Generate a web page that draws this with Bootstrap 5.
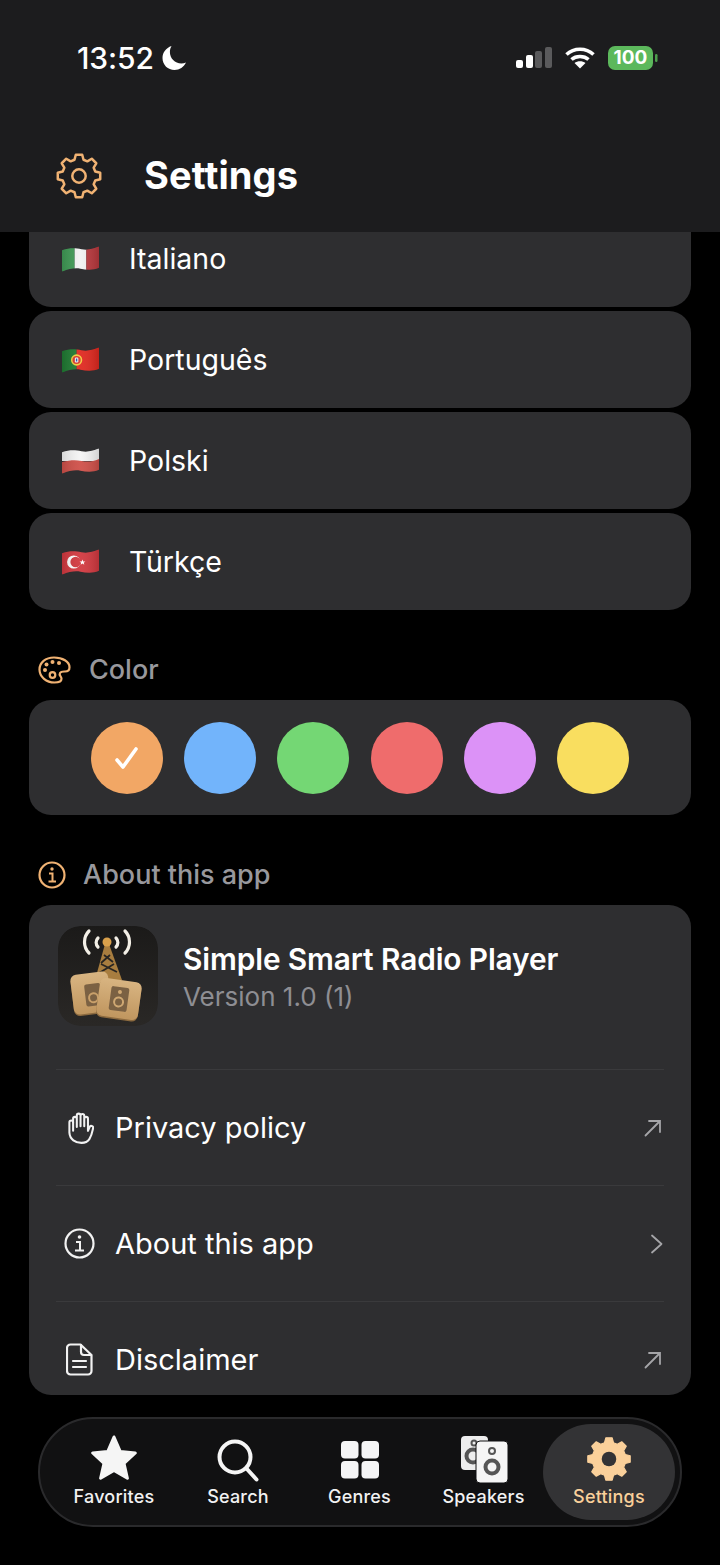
<!DOCTYPE html>
<html lang="en">
<head>
  <meta charset="UTF-8">
  <meta name="viewport" content="width=device-width, initial-scale=1">
  <title>Settings</title>
  <link href="https://cdn.jsdelivr.net/npm/bootstrap@5.3.0/dist/css/bootstrap.min.css" rel="stylesheet">
  <style>
    body { background: #000; color: #fff; font-family: Inter, "Liberation Sans", sans-serif; width: 720px; height: 1565px; }
    .top-head { background: #1c1c1e; height: 232px; flex: none; }
    .status-line { height: 116px; padding: 42px 62px 0 77px; }
    .clock { font-size: 30px; font-weight: 500; line-height: 32px; letter-spacing: -.1px; }
    .head-title { padding: 4px 0 0 56px; height: 116px; }
    .head-title h1 { font-size: 38px; font-weight: 700; margin: 0 0 0 42px; letter-spacing: .1px; }
    .page-body { padding: 0 29px; flex: none; }
    .panel { background: #2e2e30; border-radius: 22px; }
    .lang-row { height: 97px; margin-bottom: 4px; padding-left: 33px; font-size: 28.500px; gap: 30px; }
    .lang-row span { padding-top: 2px; }
    .lang-row.cut-top { height: 75px; border-radius: 0 0 22px 22px; padding-bottom: 22px; }
    .lang-row:last-of-type { margin-bottom: 0; }
    .sect-label { height: 36px; margin: 41px 0 13px; padding: 2px 0 0 9px; color: #98989d; font-size: 27px; font-weight: 500; }
    .swatches { height: 115px; gap: 21.200px; }
    .swatch { width: 72px; height: 72px; border-radius: 50%; }
    .about-panel { height: 490px; overflow: hidden; }
    .app-line { height: 164px; padding: 21px 0 0 29px; }
    .app-icon { width: 100px; height: 100px; border-radius: 22px; flex: none; }
    .app-text { margin: 14px 0 0 25px; }
    .app-name { font-size: 29.800px; font-weight: 600; line-height: 38px; letter-spacing: -.1px; }
    .app-ver { font-size: 26px; color: #8e8e93; line-height: 38px; }
    .link-line { height: 116px; margin: 0 27px; border-top: 1px solid #3a3a3c; font-size: 29px; }
    .link-icon { width: 46px; margin-right: 13px; }
    .go-arrow { margin-right: 2px; }
    .go-chevron { margin-right: 1px; }
    .tab-strip { margin: 22px 38px 0; height: 110px; background: #111112; border: 2px solid #2a2a2c; border-radius: 55px; padding: 5px 5px 5px 12px; flex: none; }
    .tab-item { font-size: 18px; font-weight: 500; line-height: 22px; height: 96px; flex: none; color: #f2f2f2; letter-spacing: .2px; padding-bottom: 12px; }
    .tab-item svg { height: 50px; margin-bottom: 2px; }
    .tab-on { background: #333335; border-radius: 48px; color: #fad09a; width: 132px; margin-left: -4px; }
  </style>
</head>
<body class="d-flex flex-column overflow-hidden">
  <svg class="position-absolute" width="0" height="0">
    <defs>
      <clipPath id="flagWave"><path d="M0 4C9 1 14 2 20 3S31 3 38 0V22C31 25 25 24 19 23S8 23 0 26Z"/></clipPath>
      <linearGradient id="flagShade" x1="0" x2="1" y1="0" y2="0">
        <stop offset="0" stop-color="#000" stop-opacity=".12"/>
        <stop offset=".5" stop-color="#fff" stop-opacity=".06"/>
        <stop offset="1" stop-color="#000" stop-opacity=".14"/>
      </linearGradient>
      <linearGradient id="tileShade" x1="0" x2="0" y1="0" y2="1">
        <stop offset="0" stop-color="#d8b481"/>
        <stop offset="1" stop-color="#c0965f"/>
      </linearGradient>
    </defs>
  </svg>

  <header class="top-head">
    <div class="status-line d-flex justify-content-between align-items-start">
      <div class="d-flex align-items-center gap-2">
        <span class="clock">13:52</span>
        <svg width="25" height="26" viewBox="0 0 25 26"><path fill="#fff" d="M9.500 1C4 3 .5 7.500.5 13c0 7 5.500 12 12 12 5 0 9.500-3 11.500-7.500-1.500.6-3 .9-4.600.9-6.500 0-11.500-5-11.500-11.400C7.900 4.800 8.500 2.800 9.500 1z"/></svg>
      </div>
      <div class="d-flex align-items-center" style="gap:13px;margin-top:4px">
        <svg width="36" height="22" viewBox="0 0 36 22">
          <rect x="0" y="13" width="7" height="8" rx="2" fill="#fff"/>
          <rect x="10" y="8" width="7" height="13" rx="2" fill="#fff"/>
          <rect x="19" y="4" width="7" height="17" rx="2" fill="#5a5a5c"/>
          <rect x="29" y="0" width="7" height="21" rx="2" fill="#5a5a5c"/>
        </svg>
        <svg width="30" height="22" viewBox="0 0 30 22" fill="none" stroke="#fff" stroke-width="3.600">
          <path d="M1.500 7.500C9 .5 21 .5 28.500 7.500"/>
          <path d="M6.500 12.500C11 8.500 19 8.500 23.500 12.500"/>
          <path fill="#fff" stroke="none" d="M9.500 16C12.500 13.500 17.500 13.500 20.500 16L15 21.500Z"/>
        </svg>
        <div class="d-flex align-items-center">
          <svg width="50" height="24" viewBox="0 0 50 24">
            <rect x="0" y="0" width="45" height="24" rx="7" fill="#5cb85c"/>
            <rect x="47" y="8" width="2.500" height="8" rx="1.200" fill="#4d9d4d"/>
            <text x="22.500" y="18" text-anchor="middle" font-family="Inter, sans-serif" font-size="19" font-weight="700" fill="#fff">100</text>
          </svg>
        </div>
      </div>
    </div>
    <div class="head-title d-flex align-items-center">
      <svg width="46" height="46" viewBox="0 0 24 24" fill="none" stroke="#f0b273" stroke-width="1.300" stroke-linejoin="round">
        <path class="gear-shape"/>
        <circle cx="12" cy="12" r="3.500"/>
      </svg>
      <h1>Settings</h1>
    </div>
  </header>

  <main class="page-body">
    <div class="panel lang-row cut-top d-flex align-items-center">
      <svg width="37" height="26" viewBox="0 0 38 26"><g clip-path="url(#flagWave)"><rect width="13" height="26" fill="#3f9a55"/><rect x="13" width="12" height="26" fill="#f2f2f2"/><rect x="25" width="13" height="26" fill="#b9383d"/><rect width="38" height="26" fill="url(#flagShade)"/></g></svg>
      <span>Italiano</span>
    </div>
    <div class="panel lang-row d-flex align-items-center">
      <svg width="37" height="26" viewBox="0 0 38 26"><g clip-path="url(#flagWave)"><rect width="15" height="26" fill="#1f7a32"/><rect x="15" width="23" height="26" fill="#e0281f"/><circle cx="15" cy="13" r="5.800" fill="#f2cf3c"/><circle cx="15" cy="13" r="4.200" fill="#d8352c"/><rect x="13.200" y="10.500" width="3.600" height="5" rx="1.200" fill="#f4f4f4"/><rect x="14.300" y="11.500" width="1.400" height="3" fill="#2a4fa8"/><rect width="38" height="26" fill="url(#flagShade)"/></g></svg>
      <span>Português</span>
    </div>
    <div class="panel lang-row d-flex align-items-center">
      <svg width="37" height="26" viewBox="0 0 38 26"><g clip-path="url(#flagWave)"><rect width="38" height="13" fill="#f4f4f4"/><path fill="#cf4f48" d="M0 14C9 12 14 12 20 13S31 14 38 11V26H0Z"/><rect width="38" height="26" fill="url(#flagShade)"/></g></svg>
      <span>Polski</span>
    </div>
    <div class="panel lang-row d-flex align-items-center">
      <svg width="37" height="26" viewBox="0 0 38 26"><g clip-path="url(#flagWave)"><rect width="38" height="26" fill="#d2383f"/><circle cx="12" cy="13" r="6.800" fill="#fff"/><circle cx="14" cy="13" r="5.400" fill="#d2383f"/><path fill="#fff" d="M21 10.500l.8 2 2.200-.1-1.700 1.300.6 2.100-1.900-1.200-1.900 1.200.6-2.100-1.700-1.300 2.200.1z"/><rect width="38" height="26" fill="url(#flagShade)"/></g></svg>
      <span>Türkçe</span>
    </div>

    <div class="sect-label d-flex align-items-center" style="gap:18px">
      <svg width="33" height="28" viewBox="0 0 33 28" fill="none" stroke="#f0b273" stroke-width="2.200">
        <path d="M16 1.500C7.500 1.500 1.500 6.500 1.500 13.500c0 7.500 7 13 15 13 4.500 0 7-1.500 7-3.800 0-2.700-3-3.200-1.500-5.700 1-1.700 3-1.500 5-1.500 2.800 0 4.500-1.600 4.500-4.300C31.500 5.500 24.500 1.500 16 1.500z"/>
        <circle cx="14.500" cy="19" r="2.800"/>
        <g fill="#f0b273" stroke="none"><circle cx="7" cy="14" r="2"/><circle cx="8.500" cy="8.500" r="2"/><circle cx="14.500" cy="6" r="2"/><circle cx="21" cy="7" r="2"/></g>
      </svg>
      <span>Color</span>
    </div>
    <div class="panel swatches d-flex align-items-center justify-content-center">
      <div class="swatch d-flex align-items-center justify-content-center" style="background:#f2a765">
        <svg width="26" height="24" viewBox="0 0 26 24" fill="none" stroke="#fff" stroke-width="3.600" stroke-linecap="round" stroke-linejoin="round"><path d="M3 14l6 7L22 3"/></svg>
      </div>
      <div class="swatch" style="background:#72b4fb"></div>
      <div class="swatch" style="background:#74d774"></div>
      <div class="swatch" style="background:#ef6c6c"></div>
      <div class="swatch" style="background:#dc92f7"></div>
      <div class="swatch" style="background:#f9de5f"></div>
    </div>

    <div class="sect-label d-flex align-items-center" style="gap:17px">
      <svg width="28" height="28" viewBox="0 0 28 28" fill="none" stroke="#f0b273" stroke-width="2.200"><circle cx="14" cy="14" r="12.500"/><path d="M11 12.500h3.500V20M10.500 20.500h7.500" stroke-width="2"/><circle cx="14" cy="8" r="1.700" fill="#f0b273" stroke="none"/></svg>
      <span>About this app</span>
    </div>
    <div class="panel about-panel">
      <div class="app-line d-flex align-items-start">
        <svg class="app-icon" viewBox="0 0 100 100">
          <defs><linearGradient id="iconBg" x1="0" x2="0" y1="0" y2="1"><stop offset="0" stop-color="#1b1a19"/><stop offset="1" stop-color="#2a2826"/></linearGradient></defs>
          <rect width="100" height="100" rx="22" fill="url(#iconBg)"/>
          <g fill="none" stroke="#f3efe6" stroke-width="3.200" stroke-linecap="round">
            <path d="M40 12C37.500 14.500 37.500 18.500 40 21M31 5C25 11 25 21 31 27"/>
            <path d="M58 12C60.500 14.500 60.500 18.500 58 21M67 5C73 11 73 21 67 27"/>
          </g>
          <path fill="#a87d3f" d="M47 18h4L64 54H37z"/>
          <g fill="none" stroke="#2a2622" stroke-width="1.800"><path d="M46 29L55 36M52 29L43 37M43 38L59 46M56 38L41 47"/></g>
          <circle cx="49" cy="16" r="4.500" fill="#d9a04b"/>
          <g transform="rotate(-7 33 67)">
            <rect x="14" y="47" width="38" height="40" rx="6" fill="#8c6a3f" transform="translate(0 1.500)"/>
            <rect x="14" y="47" width="38" height="40" rx="6" fill="url(#tileShade)"/>
            <rect x="27" y="58" width="16" height="22" rx="2" fill="#7b6143"/>
            <circle cx="35" cy="72" r="4.500" fill="none" stroke="#c9a06a" stroke-width="2"/>
          </g>
          <g transform="rotate(8 61 73)">
            <rect x="40" y="54" width="42" height="38" rx="6" fill="#8c6a3f" transform="translate(0 1.500)"/>
            <rect x="40" y="54" width="42" height="38" rx="6" fill="url(#tileShade)"/>
            <rect x="52" y="61" width="18" height="24" rx="2" fill="#7b6143"/>
            <circle cx="61" cy="66" r="2" fill="#cfa873"/>
            <circle cx="61" cy="76" r="4.500" fill="none" stroke="#cfa873" stroke-width="2"/>
          </g>
        </svg>
        <div class="app-text">
          <div class="app-name">Simple Smart Radio Player</div>
          <div class="app-ver">Version 1.0 (1)</div>
        </div>
      </div>

      <div class="link-line d-flex align-items-center">
        <div class="link-icon d-flex justify-content-center">
          <svg width="26" height="32" viewBox="0 0 28 34" fill="none" stroke="#f2f2f2" stroke-width="2.200" stroke-linecap="round" stroke-linejoin="round" style="margin-left:3px">
            <path d="M5.500 20V7a2 2 0 0 1 4 0v9M9.500 15V3.500a2 2 0 0 1 4 0V15M13.500 15V4a2 2 0 0 1 4 0v11M17.500 15V7a2 2 0 0 1 4 0v12.500"/>
            <path d="M21.500 20l2-4.500a2 2 0 0 1 3.500 1.800C26 22 25.500 25 23 29c-1.800 2.800-5 4-8.500 4C8 33 2 29.500 1.500 22V11a2 2 0 0 1 4 0"/>
          </svg>
        </div>
        <span class="flex-grow-1">Privacy policy</span>
        <svg width="18" height="18" viewBox="0 0 18 18" fill="none" stroke="#a5a5a8" stroke-width="1.800" stroke-linecap="round" class="go-arrow"><path d="M1.500 16.500L16 2M5 2h11v11"/></svg>
      </div>
      <div class="link-line d-flex align-items-center">
        <div class="link-icon d-flex justify-content-center">
          <svg width="31" height="31" viewBox="0 0 31 31" fill="none" stroke="#f2f2f2" stroke-width="2.200"><circle cx="15.500" cy="15.500" r="14"/><path d="M12 14h4v8.500M11 22.500h9" stroke-width="2"/><circle cx="15.500" cy="9" r="1.800" fill="#f2f2f2" stroke="none"/></svg>
        </div>
        <span class="flex-grow-1">About this app</span>
        <svg width="13" height="20" viewBox="0 0 13 20" fill="none" stroke="#a5a5a8" stroke-width="1.800" stroke-linecap="round" stroke-linejoin="round" class="go-chevron"><path d="M2 1.500L11.500 10 2 18.500"/></svg>
      </div>
      <div class="link-line d-flex align-items-center">
        <div class="link-icon d-flex justify-content-center">
          <svg width="27" height="33" viewBox="0 0 27 33" fill="none" stroke="#f2f2f2" stroke-width="2.200" stroke-linecap="round" stroke-linejoin="round">
            <path d="M4.500 1.500h10L25.500 12v16a3.500 3.500 0 0 1-3.500 3.500H4.500A3.500 3.500 0 0 1 1 28V5a3.500 3.500 0 0 1 3.500-3.500z"/>
            <path d="M15 2v7a3 3 0 0 0 3 3h7M7 18h13M7 24h13"/>
          </svg>
        </div>
        <span class="flex-grow-1">Disclaimer</span>
        <svg width="18" height="18" viewBox="0 0 18 18" fill="none" stroke="#a5a5a8" stroke-width="1.800" stroke-linecap="round" class="go-arrow"><path d="M1.500 16.500L16 2M5 2h11v11"/></svg>
      </div>
    </div>
  </main>

  <nav class="tab-strip d-flex">
    <div class="tab-item d-flex flex-column align-items-center justify-content-end" style="width:124px">
      <svg width="46" height="50" viewBox="0 0 46 50"><path fill="#f5f5f5" stroke="#f5f5f5" stroke-width="3" stroke-linejoin="round" d="M23 3l6.300 14.500 15 1.500-11.300 10.300 3.400 15L23 36.500 9.600 44.300l3.400-15L1.700 19l15-1.500z"/></svg>
      <span>Favorites</span>
    </div>
    <div class="tab-item d-flex flex-column align-items-center justify-content-end" style="width:124px">
      <svg width="42" height="50" viewBox="0 0 42 50" fill="none" stroke="#f5f5f5" stroke-width="4" stroke-linecap="round"><circle cx="18" cy="23" r="15.500"/><path d="M29.500 34.500L39.500 45.500"/></svg>
      <span>Search</span>
    </div>
    <div class="tab-item d-flex flex-column align-items-center justify-content-end" style="width:119px">
      <svg width="38" height="50" viewBox="0 0 38 50" fill="#f5f5f5"><rect x="0" y="7" width="17.500" height="17.500" rx="4"/><rect x="20.500" y="7" width="17.500" height="17.500" rx="4"/><rect x="0" y="27" width="17.500" height="17.500" rx="4"/><rect x="20.500" y="27" width="17.500" height="17.500" rx="4"/></svg>
      <span>Genres</span>
    </div>
    <div class="tab-item d-flex flex-column align-items-center justify-content-end" style="width:129px">
      <svg width="48" height="50" viewBox="0 0 48 50">
        <rect x="1" y="2" width="27" height="34" rx="4" fill="#ededed"/>
        <circle cx="14" cy="9" r="2.500" fill="none" stroke="#555" stroke-width="2"/>
        <circle cx="13" cy="22" r="6.500" fill="none" stroke="#555" stroke-width="4"/>
        <rect x="16" y="7" width="32" height="42" rx="4" fill="#f5f5f5" stroke="#111112" stroke-width="1"/>
        <circle cx="32" cy="17" r="3" fill="none" stroke="#555" stroke-width="2"/>
        <circle cx="32" cy="33" r="6.500" fill="none" stroke="#555" stroke-width="4"/>
      </svg>
      <span>Speakers</span>
    </div>
    <div class="tab-item tab-on d-flex flex-column align-items-center justify-content-end" style="margin-left:-5px">
      <svg width="46" height="50" viewBox="0 0 24 26" fill="#fad09a" stroke="#fad09a" stroke-width=".6" stroke-linejoin="round">
        <path class="gear-shape" transform="translate(0 1)"/>
        <circle cx="12" cy="13" r="3.800" fill="#333335" stroke="none"/>
      </svg>
      <span>Settings</span>
    </div>
  </nav>

  <script src="https://cdn.jsdelivr.net/npm/bootstrap@5.3.0/dist/js/bootstrap.bundle.min.js"></script>
  <script>
    // both gears share one 8-tooth outline
    let gear = "";
    for (let i = 0; i < 8; i++) {
      const a = i * Math.PI / 4 - Math.PI / 2;
      [[8.8, -0.27], [11.2, -0.15], [11.2, 0.15], [8.8, 0.27]].forEach(function (p) {
        const x = 12 + p[0] * Math.cos(a + p[1]);
        const y = 12 + p[0] * Math.sin(a + p[1]);
        gear += (gear ? "L" : "M") + x.toFixed(2) + " " + y.toFixed(2);
      });
    }
    document.querySelectorAll(".gear-shape").forEach(function (el) {
      el.setAttribute("d", gear + "Z");
    });
  </script>
</body>
</html>
